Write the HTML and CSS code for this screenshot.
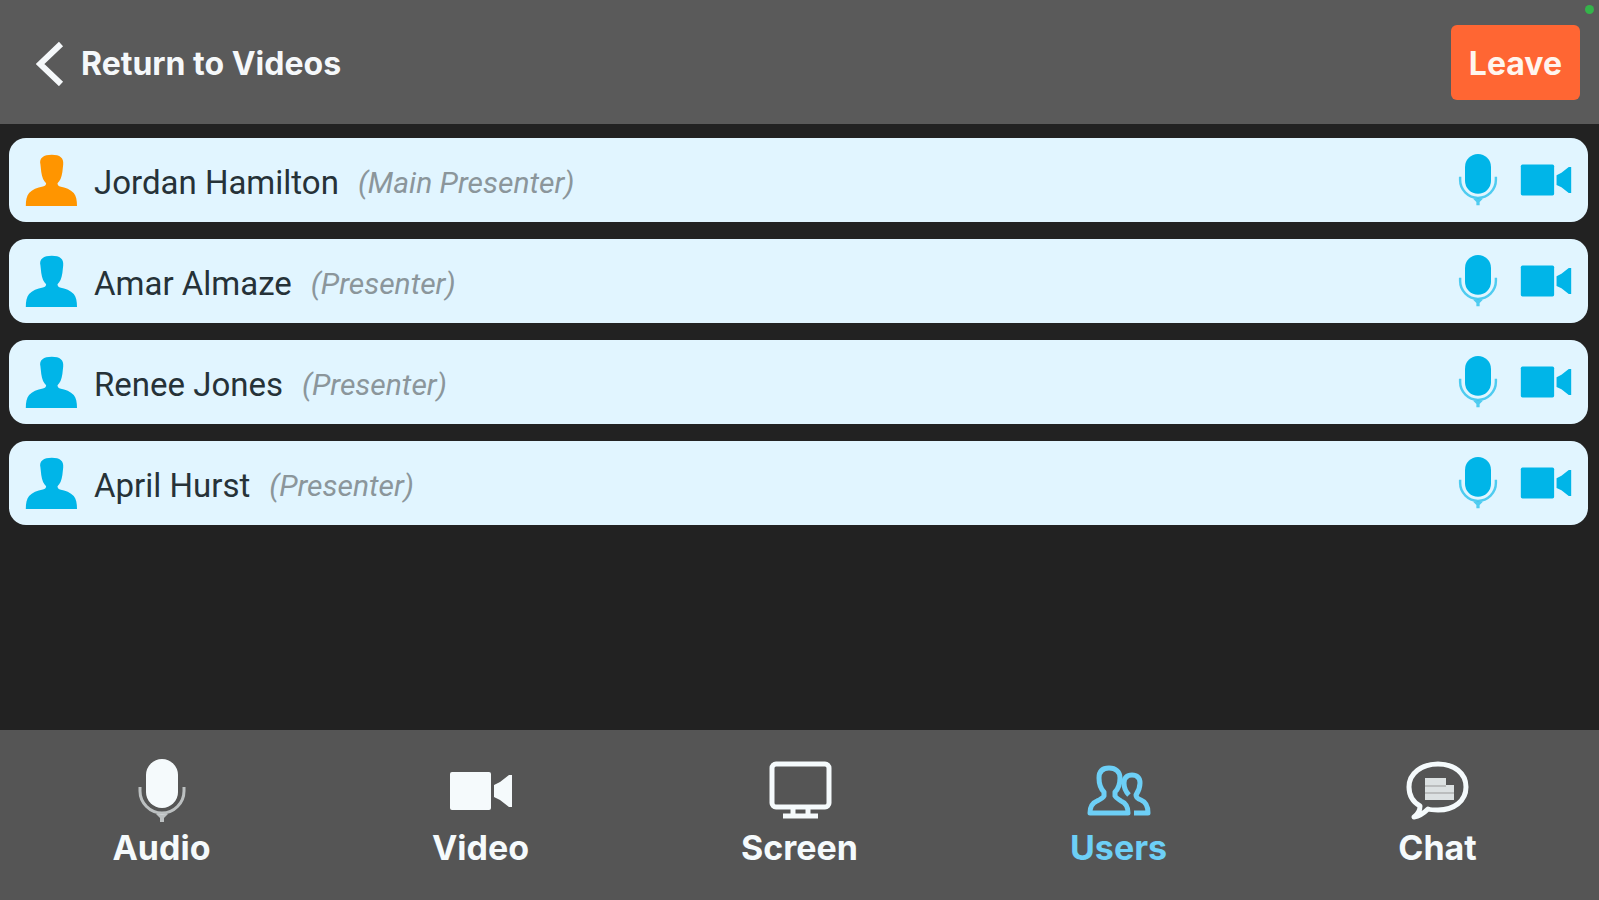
FILE: index.html
```html
<!DOCTYPE html>
<html lang="en">
<head>
<meta charset="UTF-8">
<meta name="viewport" content="width=device-width, initial-scale=1">
<title>Users</title>
    <link rel="stylesheet" href="styles.css">
</head>
<body>
<!-- shared icons -->
<svg class="sprite" aria-hidden="true">
    <symbol id="icon-person" viewBox="0 0 64 64">
        <path fill="currentColor" d="M33 1c10 0 15 4 14 12l-1 9c-1 7-3 11-6 14 0 2 1 3 3 4 7 1 13 4 17 8 3 4 4 9 4 16H1c0-7 1-12 4-16 4-4 10-7 17-8 3-1 4-2 4-4-3-3-5-7-6-14l-1-9C17 5 23 1 33 1z"/>
    </symbol>
    <symbol id="icon-mic" viewBox="0 0 64 64">
        <rect x="16" y="0" width="32" height="49" rx="16" fill="currentColor"/>
        <path d="M10 28v4c0 12 10 22 22 22s22-10 22-22v-4" fill="none" stroke="currentColor" stroke-width="3" opacity=".65"/>
        <path d="M26 55h12l-4 4v4h-4v-4z" fill="currentColor" opacity=".65"/>
    </symbol>
    <symbol id="icon-video" viewBox="0 0 64 64">
        <rect x="1" y="13" width="41" height="38" rx="2" fill="currentColor"/>
        <path fill="currentColor" d="M45 26l6-3 9-7h3v32h-3l-9-7-6-3z"/>
    </symbol>
    <symbol id="icon-screen" viewBox="0 0 64 64">
        <rect x="4" y="5" width="57" height="43" rx="4" fill="none" stroke="currentColor" stroke-width="5"/>
        <path d="M25 49v7M40 49v7M15 57h35" fill="none" stroke="currentColor" stroke-width="5"/>
    </symbol>
    <symbol id="icon-users" viewBox="0 0 64 64">
        <g fill="none" stroke="currentColor" stroke-width="5" stroke-linejoin="round">
            <path d="M22 9c-7 0-10 4-10 10 0 7 2 11 5 14v4c-1 2-3 3-7 5-5 2-7 6-7 12h38c0-6-2-10-7-12-3-2-5-3-6-5v-4c3-3 5-7 5-14 0-6-4-10-11-10z"/>
            <path d="M45 16c-5 0-8 3-8 8 0 6 2 9 5 12M45 16c5 0 8 3 8 8 0 6-2 9-4 12 0 3 2 4 5 5 5 2 7 6 7 13H47"/>
        </g>
    </symbol>
    <symbol id="icon-chat" viewBox="0 0 64 64">
        <path d="M14 47C7 43 3 36 3 28 3 14 16 5 32 5s28 9 28 23-12 23-28 23c-4 0-7 0-10-1-4 4-8 7-14 8 4-3 6-6 6-11z" fill="none" stroke="currentColor" stroke-width="5" stroke-linejoin="round"/>
        <path d="M19 19h21v7h8v15H19z" fill="currentColor" opacity=".85"/>
        <path d="M19 27h21M19 34h29" stroke="#999" stroke-width="1"/>
    </symbol>
</svg>

<header class="topbar">
    <a class="back" href="#">
        <svg class="back-icon" viewBox="0 0 28 46" aria-hidden="true"><path d="M25 4L4 24l21 20" fill="none" stroke="currentColor" stroke-width="6"/></svg>
        <span class="back-text">Return to Videos</span>
    </a>
    <button class="leave" type="button">Leave</button>
    <span class="status-dot"></span>
</header>

<main class="content">
    <ul class="user-list">
        <li class="user main-presenter">
            <svg class="icon avatar" aria-hidden="true"><use href="#icon-person"/></svg>
            <span class="name">Jordan Hamilton</span>
            <em class="role">(Main Presenter)</em>
            <button class="device" type="button" aria-label="Microphone"><svg class="icon"><use href="#icon-mic"/></svg></button>
            <button class="device" type="button" aria-label="Camera"><svg class="icon"><use href="#icon-video"/></svg></button>
        </li>
        <li class="user">
            <svg class="icon avatar" aria-hidden="true"><use href="#icon-person"/></svg>
            <span class="name">Amar Almaze</span>
            <em class="role">(Presenter)</em>
            <button class="device" type="button" aria-label="Microphone"><svg class="icon"><use href="#icon-mic"/></svg></button>
            <button class="device" type="button" aria-label="Camera"><svg class="icon"><use href="#icon-video"/></svg></button>
        </li>
        <li class="user">
            <svg class="icon avatar" aria-hidden="true"><use href="#icon-person"/></svg>
            <span class="name">Renee Jones</span>
            <em class="role">(Presenter)</em>
            <button class="device" type="button" aria-label="Microphone"><svg class="icon"><use href="#icon-mic"/></svg></button>
            <button class="device" type="button" aria-label="Camera"><svg class="icon"><use href="#icon-video"/></svg></button>
        </li>
        <li class="user">
            <svg class="icon avatar" aria-hidden="true"><use href="#icon-person"/></svg>
            <span class="name">April Hurst</span>
            <em class="role">(Presenter)</em>
            <button class="device" type="button" aria-label="Microphone"><svg class="icon"><use href="#icon-mic"/></svg></button>
            <button class="device" type="button" aria-label="Camera"><svg class="icon"><use href="#icon-video"/></svg></button>
        </li>
    </ul>
</main>

<nav class="tabs">
    <button class="tab" type="button"><svg class="tab-icon"><use href="#icon-mic"/></svg>Audio</button>
    <button class="tab" type="button"><svg class="tab-icon"><use href="#icon-video"/></svg>Video</button>
    <button class="tab" type="button"><svg class="tab-icon"><use href="#icon-screen"/></svg>Screen</button>
    <button class="tab active" type="button" aria-current="page"><svg class="tab-icon"><use href="#icon-users"/></svg>Users</button>
    <button class="tab" type="button"><svg class="tab-icon"><use href="#icon-chat"/></svg>Chat</button>
</nav>
</body>
</html>
```

FILE: styles.css
```css
* {
  box-sizing: border-box;
}
body {
  display: flex;
  flex-direction: column;
  min-height: 100vh;
  margin: 0;
  background-color: #222;
  font-family: Roboto, sans-serif;
  font-size: 33px;
}
button {
  border: none;
  background: none;
  font-family: inherit;
  cursor: pointer;
}
.sprite {
  position: absolute;
  width: 0;
  height: 0;
}

/* top bar */
.topbar {
  position: relative;
  display: flex;
  align-items: center;
  justify-content: space-between;
  padding: 25px 19px 24px 36px;
  background-color: #5a5a5a;
  font-family: Inter, sans-serif;
}
.back {
  display: flex;
  align-items: center;
  gap: 17px;
  color: #f5f8fa;
  font-size: 32px;
  font-weight: 700;
  text-decoration: none;
}
.back-text {
  padding-top: 2px;
}
.back-icon {
  width: 28px;
  height: 46px;
}
.leave {
  padding: 2px 18px 0;
  border-radius: 6px;
  background-color: #ff6633;
  color: #fff5ee;
  font-size: 32px;
  font-weight: 700;
  line-height: 73px;
}
.status-dot {
  position: absolute;
  top: 5px;
  right: 5px;
  width: 9px;
  height: 9px;
  border-radius: 50%;
  background-color: #34b44a;
}

/* user list */
.content {
  flex: 1;
  padding: 14px 11px 14px 9px;
}
.user-list {
  display: flex;
  flex-direction: column;
  gap: 17px;
  margin: 0;
  padding: 0;
  list-style: none;
}
.user {
  display: flex;
  align-items: center;
  padding: 16px;
  border-radius: 17px;
  background-color: #e1f5ff;
  color: #00b5e8;
}
.icon {
  display: block;
  width: 52px;
  height: 52px;
}
.main-presenter .avatar {
  color: #ff9500;
}
.name {
  margin: 0 19px 0 17px;
  padding-top: 4px;
  color: #263238;
}
.role {
  margin-right: auto;
  padding-top: 4px;
  color: #8b969b;
  font-size: 30px;
}
.device {
  margin-left: 16px;
  padding: 0;
  color: inherit;
}

/* bottom tabs */
.tabs {
  display: flex;
  padding: 0 2px;
  background-color: #555;
  font-family: Inter, sans-serif;
}
.tab {
  display: flex;
  flex: 1;
  flex-direction: column;
  align-items: center;
  gap: 5px;
  padding: 29px 0 32px;
  color: #f5fafc;
  font-size: 34px;
  font-weight: 700;
  line-height: 40px;
}
.tab-icon {
  width: 64px;
  height: 64px;
}
.active {
  color: #6dcff6;
}
```
